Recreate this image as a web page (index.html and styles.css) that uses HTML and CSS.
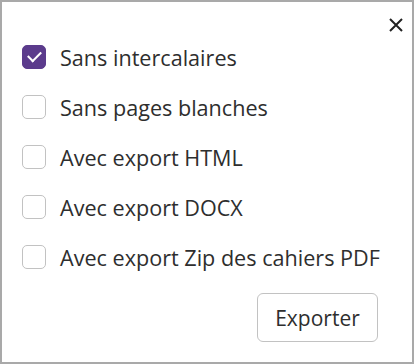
FILE: index.html
```html
<!DOCTYPE html>
<html lang="fr">
<head>
  <meta charset="UTF-8" />
  <title>Exporter</title>
  <link rel="stylesheet" href="styles.css">
</head>
<body>
  <div class="dialog">
    <div class="top">
      <button class="close" aria-label="Fermer">
        <svg width="14" height="14" viewBox="0 0 14 14"><path d="M1 1L13 13M13 1L1 13" stroke="#222" stroke-width="2" fill="none"/></svg>
      </button>
    </div>

    <div class="options">
      <label class="option"><input type="checkbox" checked /><span class="box"></span>Sans intercalaires</label>
      <label class="option"><input type="checkbox" /><span class="box"></span>Sans pages blanches</label>
      <label class="option"><input type="checkbox" /><span class="box"></span>Avec export HTML</label>
      <label class="option"><input type="checkbox" /><span class="box"></span>Avec export DOCX</label>
      <label class="option"><input type="checkbox" /><span class="box"></span>Avec export Zip des cahiers PDF</label>
    </div>

    <div class="actions">
      <button class="export">Exporter</button>
    </div>
  </div>
</body>
</html>
```

FILE: styles.css
```css
html, body {
  margin: 0;
  height: 100%;
}
body {
  font-family: "Open Sans", sans-serif;
  color: #2e2e2e;
  background: #fff;
}
.dialog {
  box-sizing: border-box;
  height: 100vh;
  border: 2px solid #a9a9a9;
  padding: 0 34px 0 20px;
  display: flex;
  flex-direction: column;
}
.top {
  display: flex;
  justify-content: flex-end;
  margin-right: -30px;
  padding-top: 14px;
  height: 16px;
}
.close {
  border: none;
  background: none;
  padding: 0;
  width: 24px;
  height: 18px;
  display: flex;
  align-items: center;
  justify-content: center;
  cursor: pointer;
}
.options {
  display: flex;
  flex-direction: column;
  white-space: nowrap;
}
.option {
  display: flex;
  align-items: center;
  gap: 14px;
  height: 50px;
  font-size: 21.6px;
  cursor: pointer;
}
.option input {
  display: none;
}
.box {
  box-sizing: border-box;
  flex: none;
  width: 24px;
  height: 24px;
  border: 1.5px solid #c2c2c2;
  border-radius: 5px;
  background: #fff;
  display: flex;
  align-items: center;
  justify-content: center;
}
.option input:checked + .box {
  background: #5b3b8c;
  border-color: #5b3b8c;
}
.option input:checked + .box::after {
  content: "";
  width: 11px;
  height: 6px;
  border-left: 2.5px solid #fff;
  border-bottom: 2.5px solid #fff;
  transform: translateY(-2px) rotate(-45deg);
}
.actions {
  display: flex;
  justify-content: flex-end;
  margin-top: 11px;
}
.export {
  font-family: "Open Sans", sans-serif;
  font-size: 21px;
  color: #2e2e2e;
  background: #fff;
  border: 1.5px solid #c2c2c2;
  border-radius: 6px;
  width: 121px;
  height: 49px;
  cursor: pointer;
}
```
